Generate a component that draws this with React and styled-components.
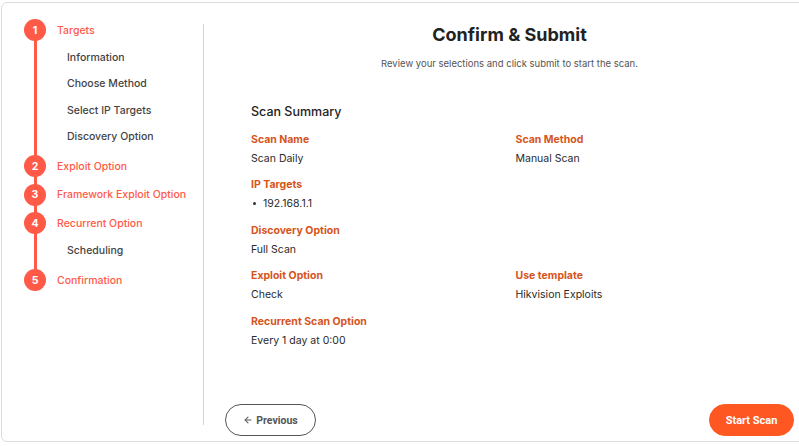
import React from "react";
import styled, { createGlobalStyle } from "styled-components";
import { ArrowLeft } from "lucide-react";

const Global = createGlobalStyle`
  html, body { margin: 0; padding: 0; background: #fff; overflow: hidden; }
  body { font-family: Inter, "Noto Sans", "Liberation Sans", sans-serif; color: #222; }
  * { box-sizing: border-box; }
`;

const Card = styled.div`
  margin: 2px 0 0 1px;
  width: 815px;
  height: 440px;
  border: 1px solid #dcdcdc;
  border-radius: 6px;
  display: flex;
  background: #fff;
`;

const Sidebar = styled.aside`
  width: 202px;
  flex: none;
  margin: 21px 0 16px;
  padding-left: 22px;
  border-right: 1px solid #d4d4d4;
`;

const Stepper = styled.ol`
  list-style: none;
  margin: -5px 0 0;
  padding: 0;
  position: relative;
  display: flex;
  flex-direction: column;
  gap: 6.5px;
  &::before {
    content: "";
    position: absolute;
    left: 9.5px;
    width: 3px;
    top: 11px;
    bottom: 11px;
    background: #ff5a47;
  }
`;

const Step = styled.li`
  position: relative;
`;

const StepHead = styled.div`
  display: flex;
  align-items: center;
  gap: 11px;
  height: 22px;
`;

const Circle = styled.span`
  width: 22px;
  height: 22px;
  border-radius: 50%;
  background: #ff5a47;
  color: #fff;
  font-size: 10.5px;
  font-weight: 700;
  display: flex;
  align-items: center;
  justify-content: center;
  position: relative;
  z-index: 1;
`;

const StepLabel = styled.span`
  color: #ff5a47;
  font-size: 10.5px;
  font-weight: 500;
`;

const SubList = styled.ul`
  list-style: none;
  margin: 0;
  padding: 1.75px 0 0 43px;
`;

const SubItem = styled.li`
  height: 26.5px;
  padding-top: 2px;
  display: flex;
  align-items: center;
  font-size: 10.5px;
  font-weight: 500;
  color: #444;
`;

const Main = styled.main`
  flex: 1;
  display: flex;
  flex-direction: column;
  padding: 20px 21px 5px;
`;

const Title = styled.h1`
  margin: 0;
  text-align: center;
  font-size: 18px;
  line-height: 24px;
  font-weight: 700;
  color: #222;
`;

const Subtitle = styled.p`
  margin: 10px 0 0;
  text-align: center;
  font-size: 9.5px;
  line-height: 14px;
  color: #555;
`;

const Summary = styled.section`
  margin-top: 32px;
  padding: 0 26px;
`;

const SummaryTitle = styled.h2`
  margin: 0 0 8.5px;
  font-size: 12.5px;
  line-height: 18px;
  font-weight: 500;
  color: #222;
`;

const Grid = styled.div`
  display: grid;
  grid-template-columns: 1fr 1fr;
  column-gap: 12px;
  row-gap: 7.5px;
`;

const Field = styled.div`
  grid-column: ${(p) => (p.$wide ? "1 / -1" : "auto")};
`;

const Label = styled.div`
  color: #d6541c;
  font-size: 10.5px;
  line-height: 19px;
  font-weight: 700;
`;

const Value = styled.div`
  color: #2a2a2a;
  font-size: 10.5px;
  line-height: 19px;
`;

const Bullets = styled.ul`
  list-style: none;
  margin: 0;
  padding: 0;
`;

const Bullet = styled.li`
  display: flex;
  align-items: center;
  gap: 7px;
  padding-left: 2px;
  color: #2a2a2a;
  font-size: 10.5px;
  line-height: 19px;
  &::before {
    content: "";
    width: 3px;
    height: 3px;
    border-radius: 50%;
    background: #333;
  }
`;

const Footer = styled.div`
  margin-top: auto;
  display: flex;
  justify-content: space-between;
  align-items: center;
`;

const Button = styled.button`
  height: 32px;
  border-radius: 16px;
  font-family: Roboto, "Liberation Sans", sans-serif;
  font-size: ${(p) => (p.$primary ? 11 : 10.5)}px;
  font-weight: 700;
  cursor: pointer;
  padding: 0;
  display: flex;
  align-items: center;
  justify-content: center;
  gap: 3px;
  width: ${(p) => p.$w}px;
  border: 1px solid ${(p) => (p.$primary ? "#ff5722" : "#555")};
  background: ${(p) => (p.$primary ? "#ff5722" : "#fff")};
  color: ${(p) => (p.$primary ? "#fff" : "#555")};
`;

const steps = [
  { n: 1, label: "Targets", subs: ["Information", "Choose Method", "Select IP Targets", "Discovery Option"] },
  { n: 2, label: "Exploit Option" },
  { n: 3, label: "Framework Exploit Option" },
  { n: 4, label: "Recurrent Option", subs: ["Scheduling"] },
  { n: 5, label: "Confirmation" },
];

export default function App() {
  return (
    <>
      <Global />
      <Card>
        <Sidebar>
          <Stepper>
            {steps.map((s) => (
              <Step key={s.n}>
                <StepHead>
                  <Circle>{s.n}</Circle>
                  <StepLabel>{s.label}</StepLabel>
                </StepHead>
                {s.subs && (
                  <SubList>
                    {s.subs.map((t) => (
                      <SubItem key={t}>{t}</SubItem>
                    ))}
                  </SubList>
                )}
              </Step>
            ))}
          </Stepper>
        </Sidebar>
        <Main>
          <Title>Confirm &amp; Submit</Title>
          <Subtitle>Review your selections and click submit to start the scan.</Subtitle>
          <Summary>
            <SummaryTitle>Scan Summary</SummaryTitle>
            <Grid>
              <Field>
                <Label>Scan Name</Label>
                <Value>Scan Daily</Value>
              </Field>
              <Field>
                <Label>Scan Method</Label>
                <Value>Manual Scan</Value>
              </Field>
              <Field $wide>
                <Label>IP Targets</Label>
                <Bullets>
                  <Bullet>192.168.1.1</Bullet>
                </Bullets>
              </Field>
              <Field $wide>
                <Label>Discovery Option</Label>
                <Value>Full Scan</Value>
              </Field>
              <Field>
                <Label>Exploit Option</Label>
                <Value>Check</Value>
              </Field>
              <Field>
                <Label>Use template</Label>
                <Value>Hikvision Exploits</Value>
              </Field>
              <Field $wide>
                <Label>Recurrent Scan Option</Label>
                <Value>Every 1 day at 0:00</Value>
              </Field>
            </Grid>
          </Summary>
          <Footer>
            <Button $w={91}>
              <ArrowLeft size={10} strokeWidth={2.5} />
              Previous
            </Button>
            <Button $w={85} $primary>Start Scan</Button>
          </Footer>
        </Main>
      </Card>
    </>
  );
}
